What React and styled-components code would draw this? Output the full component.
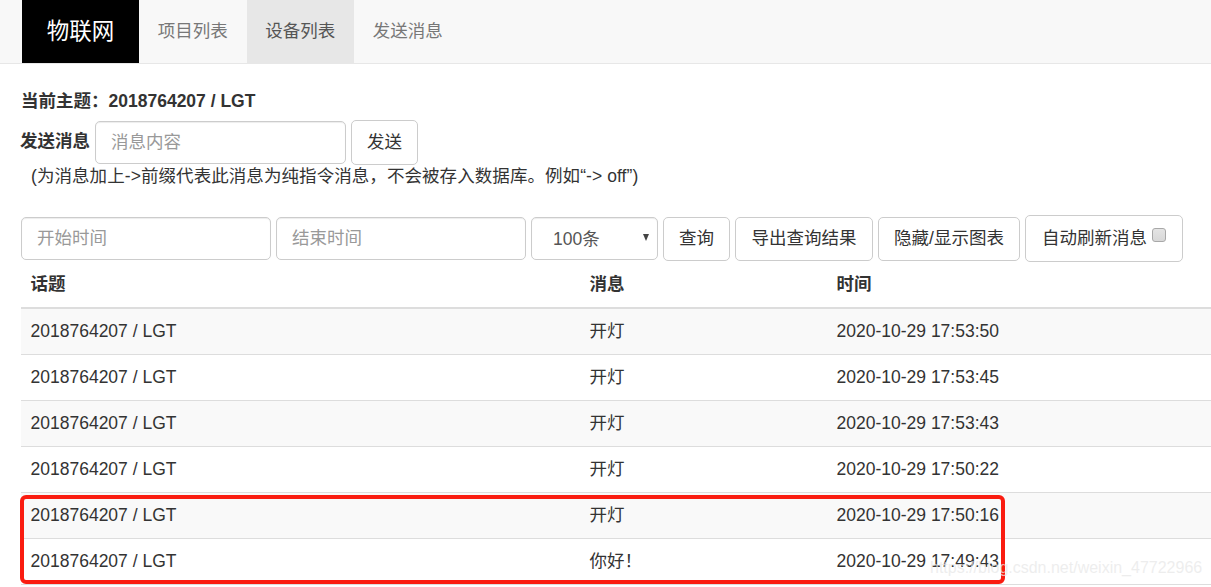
import React from 'react';
import styled, { createGlobalStyle } from 'styled-components';

const Global = createGlobalStyle`
  html, body { margin: 0; padding: 0; height: 587px; overflow: hidden; background: #fff; }
  body { font-family: "Liberation Sans", "Noto Sans CJK SC", sans-serif; font-size: 17.5px; line-height: 25px; color: #333; }
  * { box-sizing: border-box; }
`;
const Page = styled.div`position: relative; width: 1211px; height: 587px; overflow: hidden;`;
const Navbar = styled.nav`display: flex; height: 64px; padding-left: 22px; background: #f8f8f8; border-bottom: 1px solid #e7e7e7;`;
const Brand = styled.a`width: 117px; display: flex; align-items: center; justify-content: center; background: #000; color: #fff; font-size: 22.5px;`;
const NavItem = styled.a`width: 107.5px; display: flex; align-items: center; justify-content: center; background: ${p => p.$active ? '#e7e7e7' : 'transparent'}; padding-bottom: 1px; color: ${p => p.$active ? '#555' : '#777'};`;
const Content = styled.main`padding: 25px 0 0 21px;`;
const Topic = styled.div`font-weight: 700; height: 25px; white-space: nowrap;`;
const SendRow = styled.div`display: flex; align-items: center; margin-top: 6px; height: 45px;`;
const Label = styled.label`font-weight: 700; width: 74px; flex: none; position: relative; top: -1px; left: -1px;`;
const Input = styled.input`
  height: 43px; width: ${p => p.$w}px; flex: none; padding: 0 15px; border: 1px solid #ccc; border-radius: 5px;
  font: inherit; color: #555; background: #fff; box-shadow: inset 0 1px 1px rgba(0,0,0,.075); outline: none;
  &::placeholder { color: #999; opacity: 1; }
`;
const Button = styled.button`
  height: ${p => p.$h || 44}px; width: ${p => p.$w}px; flex: none; padding: 0; border: 1px solid #ccc; border-radius: 5px;
  font: inherit; line-height: 25px; color: #333; background: #fff; display: flex; align-items: center; justify-content: center;
`;
const SendButton = styled(Button)`margin-left: 5px;`;
const Hint = styled.p`margin: -1px 0 0; padding-left: 10px; height: 25px; white-space: nowrap; letter-spacing: .07px;`;
const Filters = styled.div`display: flex; align-items: center; gap: 5px; margin-top: 26px; height: 47px;`;
const SelectWrap = styled.div`
  position: relative; width: 127px; height: 43px; flex: none;
  &::after { content: ""; position: absolute; right: 9px; top: 17px; border-left: 3.5px solid transparent; border-right: 3.5px solid transparent; border-top: 7px solid #444; }
`;
const Select = styled.select`
  width: 100%; height: 100%; appearance: none; border: 1px solid #ccc; border-radius: 5px; padding: 2px 0 0 21px;
  font: inherit; color: #555; background: #fff; box-shadow: inset 0 1px 1px rgba(0,0,0,.075); outline: none;
`;
const Check = styled.input`
  appearance: none; width: 14px; height: 14px; margin: 0 0 8px 5px; flex: none; border: 1px solid #a8a8a8; border-radius: 3px;
  background: linear-gradient(#e4e4e4, #d8d8d8);
`;
const Table = styled.table`width: 1190px; border-collapse: collapse; table-layout: fixed;`;
const Th = styled.th`height: 46px; padding: 0 10px 0 9.5px; text-align: left; font-weight: 700; border-bottom: 2.5px solid #ddd;`;
const Row = styled.tr`background: ${p => p.$odd ? '#f9f9f9' : '#fff'};`;
const Td = styled.td`height: 46px; padding: 0 10px 0 9.5px; border-bottom: 1px solid #ddd;`;
const Highlight = styled.div`position: absolute; left: 20px; top: 495px; width: 985px; height: 89px; border: 4px solid #fa1c10; border-radius: 6px; pointer-events: none;`;
const Watermark = styled.div`position: absolute; left: 930px; top: 555px; font-size: 16px; line-height: 25px; color: rgba(232,232,232,.75); white-space: nowrap;`;

const rows = [
  ['开灯', '2020-10-29 17:53:50'],
  ['开灯', '2020-10-29 17:53:45'],
  ['开灯', '2020-10-29 17:53:43'],
  ['开灯', '2020-10-29 17:50:22'],
  ['开灯', '2020-10-29 17:50:16'],
  ['你好！', '2020-10-29 17:49:43'],
];

export default function App() {
  return (
    <Page>
      <Global />
      <Navbar>
        <Brand>物联网</Brand>
        <NavItem>项目列表</NavItem>
        <NavItem $active>设备列表</NavItem>
        <NavItem>发送消息</NavItem>
      </Navbar>
      <Content>
        <Topic>当前主题：2018764207 / LGT</Topic>
        <SendRow>
          <Label>发送消息</Label>
          <Input $w={251} placeholder="消息内容" />
          <SendButton $w={67} $h={45}>发送</SendButton>
        </SendRow>
        <Hint>(为消息加上-&gt;前缀代表此消息为纯指令消息，不会被存入数据库。例如“-&gt; off”)</Hint>
        <Filters>
          <Input $w={250} placeholder="开始时间" />
          <Input $w={250} placeholder="结束时间" />
          <SelectWrap>
            <Select defaultValue="100"><option value="100">100条</option></Select>
          </SelectWrap>
          <Button $w={67}>查询</Button>
          <Button $w={138}>导出查询结果</Button>
          <Button $w={142}>隐藏/显示图表</Button>
          <Button $w={158} $h={47}>自动刷新消息<Check type="checkbox" /></Button>
        </Filters>
        <Table>
          <colgroup>
            <col style={{ width: 559 }} />
            <col style={{ width: 247 }} />
            <col />
          </colgroup>
          <thead>
            <tr><Th>话题</Th><Th>消息</Th><Th>时间</Th></tr>
          </thead>
          <tbody>
            {rows.map(([msg, time], i) => (
              <Row key={i} $odd={i % 2 === 0}>
                <Td>2018764207 / LGT</Td>
                <Td>{msg}</Td>
                <Td>{time}</Td>
              </Row>
            ))}
          </tbody>
        </Table>
      </Content>
      <Highlight />
      <Watermark>https://blog.csdn.net/weixin_47722966</Watermark>
    </Page>
  );
}
